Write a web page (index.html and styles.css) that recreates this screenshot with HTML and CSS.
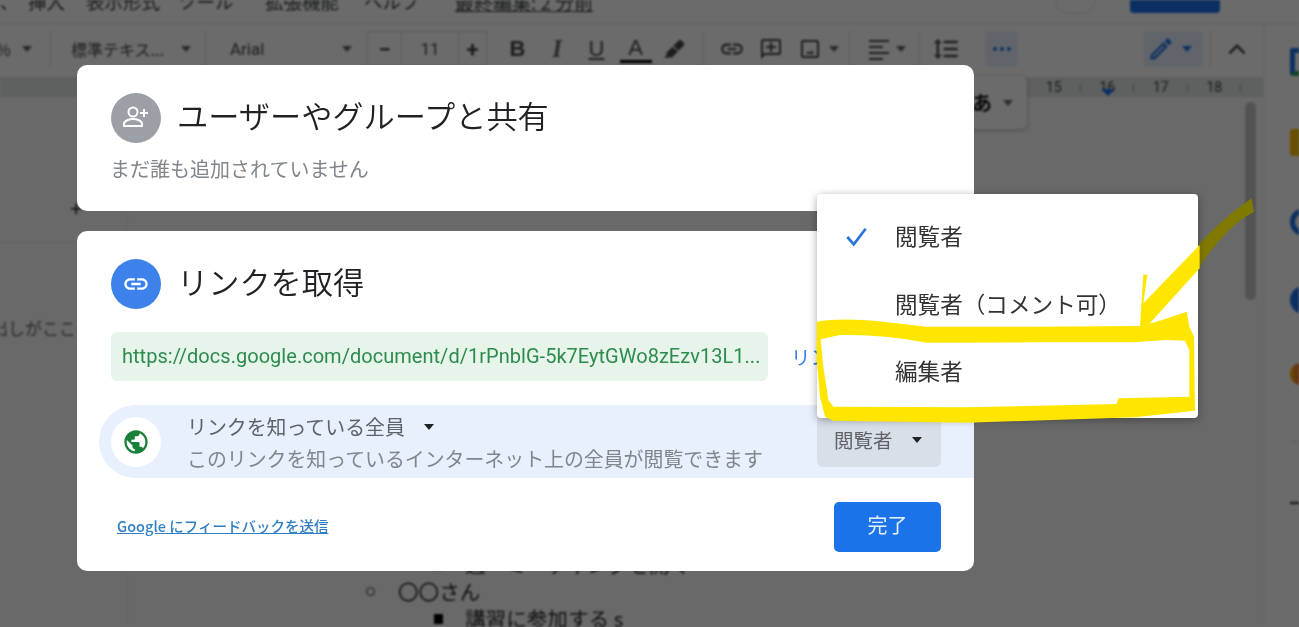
FILE: index.html
```html
<!DOCTYPE html>
<html lang="ja">
<head>
<meta charset="utf-8">
<title>ユーザーやグループと共有</title>
<link rel="stylesheet" href="styles.css">
</head>
<body>
<div class="app">
  <div class="menubar">
    <div class="menu-row">
      <span class="m-a">、</span><span class="m-b">挿入</span><span class="m-c">表示形式</span><span class="m-d">ツール</span><span class="m-e">拡張機能</span><span class="m-f">ヘルプ</span><a class="m-g">最終編集: 2 分前</a>
      <span class="m-round"></span><span class="m-share"></span>
    </div>
  </div>
  <div class="below">
    <div class="main">
      <div class="toolbar">
        <div class="t-zoom sep"><span class="pct">%</span><i class="caret"></i></div>
        <div class="t-style sep"><span>標準テキス...</span><i class="caret"></i></div>
        <div class="t-font"><span>Arial</span><i class="caret"></i></div>
        <div class="t-size"><b class="s-minus">−</b><span class="s-val">11</span><b class="s-plus">+</b></div>
        <div class="t-b ic bold">B</div>
        <div class="t-i ic ital">I</div>
        <div class="t-u ic under">U</div>
        <div class="t-a ic color">A</div>
        <div class="t-h ic sep"><svg viewBox="0 0 24 24" class="i22"><path d="M18.5 2c-.5 0-1 .2-1.400.6l-5.800 5.800 5.600 5.600 5.800-5.800c.8-.8.8-2 0-2.800l-2.800-2.800c-.4-.4-.9-.6-1.400-.6zM10.300 9.500l-6 6c-.8.800-.8 2 0 2.800L1 21.500l5.600.1.900-.9c.8.800 2 .8 2.800 0l6-6z"/></svg></div>
        <div class="t-l ic"><svg viewBox="0 0 24 24" class="i26"><path d="M3.900 12c0-1.710 1.390-3.100 3.100-3.100h4V7H7c-2.760 0-5 2.240-5 5s2.240 5 5 5h4v-1.900H7c-1.710 0-3.100-1.390-3.100-3.100zM8 13h8v-2H8v2zm9-6h-4v1.900h4c1.710 0 3.100 1.390 3.100 3.100s-1.390 3.100-3.100 3.100h-4V17h4c2.760 0 5-2.240 5-5s-2.240-5-5-5z"/></svg></div>
        <div class="t-c ic"><svg viewBox="0 0 24 24" class="i24"><path d="M20 2H4c-1.100 0-2 .9-2 2v18l4-4h14c1.100 0 2-.9 2-2V4c0-1.100-.9-2-2-2zm0 14H5.170L4 17.170V4h16v12zM11 5h2v4h4v2h-4v4h-2v-4H7V9h4z"/></svg></div>
        <div class="t-p ic"><svg viewBox="0 0 24 24" class="i24"><path d="M19 5v14H5V5h14m0-2H5c-1.100 0-2 .9-2 2v14c0 1.100.9 2 2 2h14c1.100 0 2-.9 2-2V5c0-1.100-.9-2-2-2zm-4.860 9.860l-2 2.870L10 14.140 8 17h8l-1.860-3.140z"/></svg></div>
        <div class="t-pc sep"><i class="caret"></i></div>
        <div class="t-al ic"><svg viewBox="0 0 24 24" class="i24"><path d="M2 3h20v2H2zM2 9h14v2H2zM2 15h20v2H2zM2 21h14v2H2z"/></svg></div>
        <div class="t-ac sep"><i class="caret"></i></div>
        <div class="t-ls ic"><svg viewBox="0 0 24 24" class="i28"><path d="M6 7h2.500L5 3.500 1.500 7H4v10H1.500L5 20.500 8.500 17H6V7zm4-2v2h12V5H10zm0 14h12v-2H10v2zm0-6h12v-2H10v2z"/></svg></div>
        <div class="t-more"><svg viewBox="0 0 24 24" class="i24 blue"><circle cx="5" cy="12" r="2"/><circle cx="12" cy="12" r="2"/><circle cx="19" cy="12" r="2"/></svg></div>
        <div class="t-pen"><svg viewBox="0 0 24 24" class="i28 blue"><path d="M14.060 9.020l.92.92L5.920 19H5v-.92l9.060-9.060M17.660 3c-.25 0-.51.1-.7.29l-1.830 1.830 3.750 3.750 1.830-1.830c.39-.39.39-1.020 0-1.410l-2.340-2.340c-.2-.2-.45-.29-.71-.29zm-3.600 3.190L3 17.250V21h3.750L17.810 9.940l-3.750-3.750z"/></svg><i class="caret caret-blue"></i></div>
        <div class="t-up"><svg viewBox="0 0 24 24" class="i26 stroke"><path d="M5 16l7-7 7 7"/></svg></div>
      </div>
      <div class="ruler">
        <span>15</span><span class="r16">16<i class="marker"></i></span><span>17</span><span>18</span>
      </div>
      <div class="content">
        <div class="outline">
          <div class="plus">+</div>
          <div class="outline-hint">出しがここに表示</div>
        </div>
        <div class="doc">
          <div class="li3"><i class="sq"></i>週一ミーティングを開く</div>
          <div class="li2"><i class="ring"></i>〇〇さん</div>
          <div class="li3"><i class="sq"></i>講習に参加する s</div>
        </div>
        <div class="scroll"><div class="thumb"></div></div>
      </div>
      <div class="chip"><span>あ</span><i class="caret"></i></div>
    </div>
    <div class="side">
      <i class="s-doc"></i>
      <i class="s-keep"></i>
      <i class="s-task"></i>
      <i class="s-cont"></i>
      <i class="s-map"></i>
      <i class="s-line"></i>
      <i class="s-dash"></i>
    </div>
  </div>
</div>

<div class="scrim"></div>

<svg class="arrow-under" viewBox="0 0 1497 900"><path d="M1190 200C1240 145 1290 100 1355 55L1362 95C1310 125 1270 155 1190 272Z"/></svg>

<div class="dialog">
  <section class="card card-share">
    <div class="head">
      <span class="avatar grey"><svg viewBox="0 0 32 32" class="i32 line-white"><circle cx="13" cy="10" r="4.500"/><path d="M4 24v-2c0-3.400 5.500-5 9-5s9 1.600 9 5v2z"/><path d="M24 7v8M20 11h8"/></svg></span>
      <h2>ユーザーやグループと共有</h2>
    </div>
    <p class="none">まだ誰も追加されていません</p>
  </section>
  <section class="card card-link">
    <div class="head">
      <span class="avatar bluebg"><svg viewBox="0 0 24 24" class="i28 fill-white"><path d="M3.900 12c0-1.710 1.390-3.100 3.100-3.100h4V7H7c-2.760 0-5 2.240-5 5s2.240 5 5 5h4v-1.900H7c-1.710 0-3.100-1.390-3.100-3.100zM8 13h8v-2H8v2zm9-6h-4v1.900h4c1.710 0 3.100 1.390 3.100 3.100s-1.390 3.100-3.100 3.100h-4V17h4c2.760 0 5-2.240 5-5s-2.240-5-5-5z"/></svg></span>
      <h2>リンクを取得</h2>
    </div>
    <div class="url-row">
      <div class="url">https://docs.google.com/document/d/1rPnblG-5k7EytGWo8zEzv13L1...</div>
      <a class="copy">リンクをコピー</a>
    </div>
    <div class="access">
      <span class="avatar whitebg"><svg viewBox="0 0 24 24" class="i28 green"><path d="M12 2C6.480 2 2 6.480 2 12s4.480 10 10 10 10-4.480 10-10S17.520 2 12 2zm-1 17.930c-3.950-.49-7-3.850-7-7.930 0-.62.08-1.210.21-1.790L9 15v1c0 1.100.9 2 2 2v1.930zm6.900-2.540c-.26-.81-1-1.390-1.900-1.390h-1v-3c0-.55-.45-1-1-1H8v-2h2c.55 0 1-.45 1-1V7h2c1.100 0 2-.9 2-2v-.41c2.930 1.190 5 4.060 5 7.410 0 2.080-.8 3.970-2.100 5.390z"/></svg></span>
      <div class="access-text">
        <div class="who">リンクを知っている全員<i class="caret caret-dark"></i></div>
        <div class="desc">このリンクを知っているインターネット上の全員が閲覧できます</div>
      </div>
      <div class="role">閲覧者<i class="caret caret-dark"></i></div>
    </div>
    <div class="foot">
      <a class="feedback">Google にフィードバックを送信</a>
      <button class="done">完了</button>
    </div>
  </section>
</div>

<div class="menu">
  <div class="menu-item"><svg viewBox="0 0 24 24" class="check"><path d="M2 12l7 8L22 3"/></svg>閲覧者</div>
  <div class="menu-item">閲覧者（コメント可）</div>
  <div class="menu-item">編集者</div>
</div>

<svg class="marks" viewBox="0 0 1497 900">
  <path fill-rule="evenodd" d="M50 425Q120 412 250 425L380 440L700 440L1020 438L1070 425L1160 395L1168 440L1182 470L1185 692L1005 712L500 728L100 722L75 710L60 650L50 540ZM62 478L70 560L85 660L100 680L500 682L950 672L955 655L1168 650L1168 510L1155 482L1100 480L1000 487L700 487L380 488Q250 462 120 465Z"/>
  <path d="M1199 195L1030 370L1042 285L1030 283L1020 440L1045 435L1199 265Z"/>
</svg>
</body>
</html>
```

FILE: styles.css
```css
* { box-sizing: border-box; }
html, body { margin: 0; height: 627px; overflow: hidden; }
body {
  position: relative;
  background: #fff;
  font-family: "Noto Sans CJK JP", "Noto Sans", Roboto, sans-serif;
  color: #3c4043;
}
i { display: block; font-style: normal; }
h2, p { margin: 0; font-weight: 400; }

.app { height: 627px; display: flex; flex-direction: column; filter: blur(.9px); }

/* menu */
.menubar { height: 24px; flex: none; overflow: hidden; border-bottom: 1px solid #e4e4e4; }
.menu-row { display: flex; align-items: center; height: 24px; margin-top: -11px; font-size: 18.500px; }
.m-a { width: 28px; }
.m-b { width: 58px; }
.m-c { width: 92px; }
.m-d { width: 87px; }
.m-e { width: 99px; }
.m-f { width: 91px; }
.m-g { width: 600px; font-size: 19px; text-decoration: underline; }
.m-round { width: 40px; height: 26px; border-radius: 13px; border: 1px solid #ddd; }
.m-share { width: 90px; height: 24px; margin-left: 35px; border-radius: 4px; background: #1a73e8; }

/* body */
.below { flex: 1; display: flex; min-height: 0; }
.main { position: relative; width: 1263px; display: flex; flex-direction: column; }
.side { flex: 1; border-left: 1px solid #e8eaed; background: #fff; padding: 24px 0 0 26px; overflow: hidden; display: flex; flex-direction: column; }

/* toolbar */
.toolbar { height: 53px; flex: none; display: flex; align-items: center; padding-bottom: 3px; font-size: 16px; color: #444746; }
.toolbar > div { height: 36px; display: flex; align-items: center; flex: none; }
.sep { border-right: 1px solid #dadce0; }
.caret { width: 0; height: 0; border: 5px solid transparent; border-top: 6px solid #5f6368; border-bottom: 0; flex: none; }
.caret-blue { border-top-color: #1a73e8; }
.caret-dark { border-top-color: #202124; }
.ic { justify-content: center; }
svg { display: block; }
.toolbar svg { fill: #444746; }
.i22 { width: 22px; height: 22px; }
.i24 { width: 24px; height: 24px; }
.i26 { width: 26px; height: 26px; }
.i28 { width: 28px; height: 28px; }
.i32 { width: 32px; height: 32px; }
.toolbar svg.blue { fill: #1a73e8; }
.toolbar svg.stroke { fill: none; stroke: #444746; stroke-width: 2.4; }

.t-zoom { width: 51px; gap: 14px; }
.pct { margin-left: -4px; width: 12px; }
.t-style { width: 155px; padding-left: 20px; gap: 17px; white-space: nowrap; }
.t-font { width: 161px; padding-left: 24px; font-family: Roboto, sans-serif; font-size: 17px; }
.t-font span { width: 112px; }
.t-size { width: 120px; border: 1px solid #dadce0; font-family: Roboto, sans-serif; font-size: 17px; }
.s-minus, .s-plus { display: flex; align-items: center; justify-content: center; align-self: stretch; font-size: 22px; font-weight: 700; }
.s-minus { width: 34px; border-right: 1px solid #dadce0; }
.s-val { width: 56px; text-align: center; }
.s-plus { flex: 1; border-left: 1px solid #dadce0; }
.t-b { width: 39px; margin-left: 11px; }
.t-i { width: 40px; }
.t-u { width: 39px; }
.t-a { width: 39px; }
.bold, .ital, .under, .color { font-family: "Liberation Sans", sans-serif; font-size: 22px; }
.bold { font-weight: 700; }
.toolbar .ital { font-style: italic; font-family: "Liberation Serif", serif; font-size: 25px; font-weight: 700; color: #5f6368; }
.under { text-decoration: underline; }
.color { flex-direction: column; }
.color::after { content: ""; width: 32px; height: 3px; background: #000; margin-top: -1px; }
.t-h { width: 46px; padding-right: 14px; margin-left: 3px; }
.t-l { width: 39px; margin-left: 8px; }
.t-c { width: 39px; }
.t-p { width: 39px; }
.t-pc { width: 21px; }
.t-al { width: 46px; padding-left: 12px; }
.t-ac { width: 24px; justify-content: flex-start; }
.t-ls { width: 52px; }
.t-more { width: 33px; margin-left: 13px; background: #e8f0fe; border-radius: 4px; justify-content: center; }
.t-pen { width: 60px; margin-left: 125px; background: #e8f0fe; border-radius: 4px; padding-left: 4px; gap: 7px; }
.t-up { width: 52px; margin-left: 7px; justify-content: center; border-left: 1px solid #dadce0; }

/* ruler */
.ruler { height: 20px; flex: none; background: #e3e4e4; display: flex; justify-content: flex-end; padding-right: 22px; align-items: center; font-family: Roboto, sans-serif; font-size: 14px; color: #3c4043; }
.ruler span { width: 53.500px; text-align: center; position: relative; }
.ruler span::after { content: ""; position: absolute; right: 0; top: 5px; width: 1px; height: 8px; background: #9aa0a6; }
.marker { position: absolute; left: 20px; top: 10px; width: 0; height: 0; border: 7px solid transparent; border-top: 7px solid #1a73e8; border-bottom: 0; }

/* content */
.content { flex: 1; min-height: 0; display: flex; background: #fbfbfb; overflow: hidden; }
.outline { width: 128px; flex: none; border-right: 1px solid #ececec; padding-top: 100px; font-size: 17px; overflow: hidden; }
.plus { width: 100%; height: 46px; padding-left: 70px; font-size: 22px; line-height: 20px; border-bottom: 1px solid #e4e4e4; color: #222; }
.outline-hint { margin: 72px 0 0 -9px; white-space: nowrap; color: #5f6368; }
.doc { flex: 1; padding-top: 454px; font-size: 20.600px; line-height: 27px; color: #202124; }
.li2, .li3 { display: flex; align-items: center; white-space: nowrap; }
.li2 { padding-left: 238px; gap: 23px; }
.li3 { padding-left: 306px; gap: 22px; }
.sq { width: 9px; height: 10px; background: #000; }
.ring { width: 9px; height: 9px; border: 1.500px solid #333; border-radius: 50%; }
.scroll { width: 28px; flex: none; padding: 5px 7px 0 10px; }
.thumb { height: 198px; background: #c4c7c5; border-radius: 6px; }
.chip { position: absolute; left: 960px; top: 52px; width: 67px; height: 53px; background: #fff; border-radius: 6px; box-shadow: 0 1px 4px rgba(0,0,0,.3); display: flex; align-items: center; padding-left: 12px; gap: 11px; font-size: 20px; font-weight: 700; color: #111; }

/* side icons */
.side i { flex: none; }
.s-doc { width: 28px; height: 28px; border: 5px solid #1a73e8; border-bottom-color: #34a853; border-radius: 3px; background: #fff; margin-bottom: 53px; }
.s-keep { width: 28px; height: 27px; background: #fbbc04; border-radius: 3px; margin-bottom: 52px; }
.s-task { width: 28px; height: 28px; border: 5px solid #1a73e8; border-radius: 50%; margin-bottom: 50px; }
.s-cont { width: 28px; height: 28px; background: #1a73e8; border-radius: 50%; margin-bottom: 49px; }
.s-map { width: 22px; height: 22px; background: linear-gradient(90deg, #fbbc04, #ea4335 60%, #4285f4); border-radius: 50%; margin-bottom: 56px; }
.s-line { width: 11px; height: 1px; background: #ddd; margin-bottom: 60px; }
.s-dash { width: 11px; height: 2px; background: #333; }

/* dim */
.scrim { position: absolute; inset: 0; background: rgba(0,0,0,.58); }
.arrow-under { position: absolute; left: 800px; top: 180px; width: 499px; height: 300px; fill: #807a00; filter: blur(.5px); }

/* dialog */
.dialog { position: absolute; left: 77px; top: 65px; width: 897px; display: flex; flex-direction: column; gap: 20px; filter: blur(.35px); }
.card { background: #fff; border-radius: 10px; padding: 28px 33px 0 34px; }
.card-share { height: 146px; }
.card-link { height: 340px; }
.head { display: flex; align-items: center; gap: 16px; }
.head h2 { font-size: 31.200px; line-height: 50px; margin-top: -7px; color: #202124; white-space: nowrap; font-weight: 350; }
.avatar { width: 50px; height: 50px; flex: none; border-radius: 50%; display: flex; align-items: center; justify-content: center; }
.grey { background: #9aa0a6; }
.bluebg { background: #3d82ea; }
.whitebg { background: #fff; }
.line-white { fill: none; stroke: #fff; stroke-width: 2; }
.fill-white { fill: #fff; }
.green { fill: #188038; }
.none { margin: 10px 0 0 -1px; font-size: 20px; line-height: 32px; color: #80868b; white-space: nowrap; }

.url-row { display: flex; align-items: center; margin-top: 23px; gap: 23px; white-space: nowrap; overflow: hidden; margin-right: -33px; }
.url { width: 657px; height: 49px; flex: none; background: #e6f4ea; border-radius: 6px; padding-left: 11px; line-height: 49px; font-family: Roboto, sans-serif; font-size: 20px; letter-spacing: .03px; color: #2e8b4e; overflow: hidden; }
.copy { color: #3a80e0; font-size: 19.500px; }

.access { display: flex; align-items: flex-start; height: 73px; margin: 24px -33px 0 -12px; padding: 12px 33px 0 12px; background: #e8f0fe; border-radius: 37px 0 0 37px; }
.access-text { margin-left: 26px; width: 630px; margin-top: -6px; white-space: nowrap; }
.who { display: flex; align-items: center; gap: 19px; font-size: 19.900px; line-height: 32px; color: #5f6368; }
.desc { font-size: 19.900px; line-height: 32px; color: #80868b; }
.role { width: 124px; height: 55px; flex: none; margin-top: -5px; background: #d9dfe8; border-radius: 6px; display: flex; align-items: center; padding-left: 17px; gap: 19px; font-size: 19.500px; color: #5f6368; }
.foot { display: flex; align-items: center; justify-content: space-between; margin-top: 24px; padding-left: 6px; }
.feedback { color: #2f7fc4; font-size: 14.500px; font-weight: 500; text-decoration: underline; white-space: nowrap; padding-bottom: 4px; }
.done { width: 107px; height: 50px; border: 0; padding: 0 0 5px; border-radius: 5px; background: #1a73e8; color: #e8f0fe; font: 400 20px "Noto Sans CJK JP", sans-serif; }

/* role menu */
.menu { position: absolute; left: 817px; top: 194px; width: 381px; height: 224px; padding-top: 8px; background: #fff; border-radius: 4px; box-shadow: 0 2px 8px rgba(0,0,0,.35); filter: blur(.35px); }
.menu-item { height: 67.500px; padding-left: 78px; display: flex; align-items: center; font-size: 22.600px; color: #333; position: relative; white-space: nowrap; }
.check { position: absolute; left: 27px; top: 24px; width: 25px; height: 22px; fill: none; stroke: #2b74d8; stroke-width: 3; }
.marks { position: absolute; left: 800px; top: 180px; width: 499px; height: 300px; fill: #ffe600; filter: blur(.3px); }
```
